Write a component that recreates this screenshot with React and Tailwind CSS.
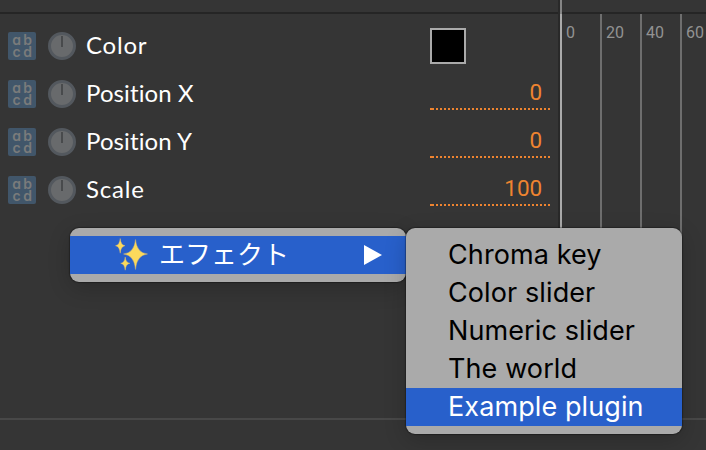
const latin = "font-['Lato','Noto_Sans_CJK_JP',sans-serif]";

function LetterIcon() {
  return (
    <div className="grid size-7 shrink-0 grid-cols-[9px_9px] grid-rows-[12px_12px] justify-center gap-x-[2px] rounded-[2px] bg-[#41566a] pt-[1.5px] text-center font-[Inter,sans-serif] text-[14px] leading-[12px] font-semibold text-[#7a7b7b] [font-feature-settings:'cv11']">
      <span>a</span>
      <span>b</span>
      <span>c</span>
      <span>d</span>
    </div>
  );
}

function DialIcon() {
  return (
    <svg width="28" height="28" viewBox="0 0 28 28" className="ml-3 shrink-0">
      <circle cx="14" cy="14" r="12.5" fill="#686a6c" stroke="#53585e" strokeWidth="3" />
      <path d="M14 4v11" stroke="#484a4c" strokeWidth="2" />
    </svg>
  );
}

function Value({ children }) {
  return (
    <div className="flex h-full w-[120px] flex-col pt-[7px]">
      <div className="h-[31px] pr-2 text-right font-[Roboto,sans-serif] text-[22.5px] leading-[30px] tracking-[-0.1px] text-[#ee8430]">
        {children}
      </div>
      <div className="flex h-0.5">
        <div className="h-0.5 w-0.5 bg-[#ee8430]" />
        <div className="h-0.5 flex-1 bg-[repeating-linear-gradient(90deg,#ee8430_0px,#ee8430_2px,transparent_2px,transparent_4px)]" />
      </div>
    </div>
  );
}

function PropertyRow({ label, tracking, children }) {
  return (
    <div className="flex h-12 items-center pl-2">
      <LetterIcon />
      <DialIcon />
      <div className={`${latin} ml-2.5 w-[344px] pb-0.5 text-[24px] leading-8 whitespace-nowrap text-white [font-variant-ligatures:none] ${tracking}`}>
        {label}
      </div>
      {children}
    </div>
  );
}

function Sparkles() {
  return (
    <svg width="34" height="34" viewBox="0 0 34 34" fill="#fbd95c" stroke="#e9c06a" strokeWidth=".4" className="shrink-0">
      <path d="M20.5 1.5Q21.7 14.8 32.5 16Q21.7 17.2 20.5 31.5Q19.3 17.2 8.5 16Q19.3 14.8 20.5 1.5Z" />
      <path d="M5.2 .5Q5.8 7.1 10 7.7Q5.8 8.3 5.2 15.2Q4.6 8.3 .5 7.7Q4.6 7.1 5.2 .5Z" />
      <path d="M10.2 19Q10.8 24.7 15 25.3Q10.8 25.9 10.2 32.2Q9.6 25.9 5.7 25.3Q9.6 24.7 10.2 19Z" />
    </svg>
  );
}

const items = ["Chroma key", "Color slider", "Numeric slider", "The world", "Example plugin"];

const menuBox =
  "absolute rounded-[9px] bg-[#aaaaaa] py-2 shadow-[0_0_1px_1px_rgba(0,0,0,0.3),0_6px_22px_rgba(0,0,0,0.2)]";

export default function App() {
  return (
    <div className="relative flex h-[450px] w-[706px] flex-col overflow-hidden bg-[#353535]">
      <div className="flex h-[418px] shrink-0">
        <div className="flex w-[558px] shrink-0 flex-col">
          <div className="h-3" />
          <div className="mb-2 h-0.5 bg-[#252525]" />
          <PropertyRow label="Color" tracking="tracking-[0.8px]">
            <div className="size-9 border-2 border-[#aaaaaa] bg-black" />
          </PropertyRow>
          <PropertyRow label="Position X" tracking="tracking-[0.1px]">
            <Value>0</Value>
          </PropertyRow>
          <PropertyRow label="Position Y" tracking="tracking-[0.1px]">
            <Value>0</Value>
          </PropertyRow>
          <PropertyRow label="Scale" tracking="tracking-[0.8px]">
            <Value>100</Value>
          </PropertyRow>
        </div>
        <div className="w-0.5 shrink-0 bg-[#292929]" />
        <div className="w-0.5 shrink-0 bg-[#aaaaaa]">
          <div className="h-3.5 bg-[#858585]" />
        </div>
        <div className="flex min-w-0 flex-1 flex-col">
          <div className="h-3" />
          <div className="h-0.5 bg-[#252525]" />
          <div className="flex flex-1 overflow-hidden font-[Roboto,sans-serif] text-[16px] leading-5 text-[#929292]">
            <div className="w-10 shrink-0 border-r-2 border-[#6e6e6e] pt-[9px] pl-1">0</div>
            <div className="w-10 shrink-0 border-r-2 border-[#6e6e6e] pt-[9px] pl-1">20</div>
            <div className="w-10 shrink-0 border-r-2 border-[#6e6e6e] pt-[9px] pl-1">40</div>
            <div className="w-10 shrink-0 pt-[9px] pl-1">60</div>
          </div>
        </div>
      </div>
      <div className="h-0.5 shrink-0 bg-[#484848]" />

      <div className={`${menuBox} top-[228px] left-[70px] w-[336px]`}>
        <div className="flex h-[38px] items-center bg-[#2860cb] pl-[45px] text-white">
          <Sparkles />
          <span className="ml-[10px] pb-1 font-['Noto_Sans_CJK_JP',sans-serif] text-[26px] leading-[34px] whitespace-nowrap">
            エフェクト
          </span>
          <svg width="18" height="20" viewBox="0 0 18 20" fill="white" className="mr-[24px] ml-auto">
            <path d="M0 0 18 10 0 20Z" />
          </svg>
        </div>
      </div>

      <div className={`${menuBox} top-[228px] left-[406px] w-[276px]`}>
        {items.map((name) => (
          <div
            key={name}
            className={`h-[38px] pl-[42px] font-[Inter,sans-serif] text-[27px] leading-[37px] tracking-[0.1px] whitespace-nowrap ${
              name === "Example plugin" ? "bg-[#2860cb] text-white" : "text-black"
            }`}
          >
            {name}
          </div>
        ))}
      </div>
    </div>
  );
}
